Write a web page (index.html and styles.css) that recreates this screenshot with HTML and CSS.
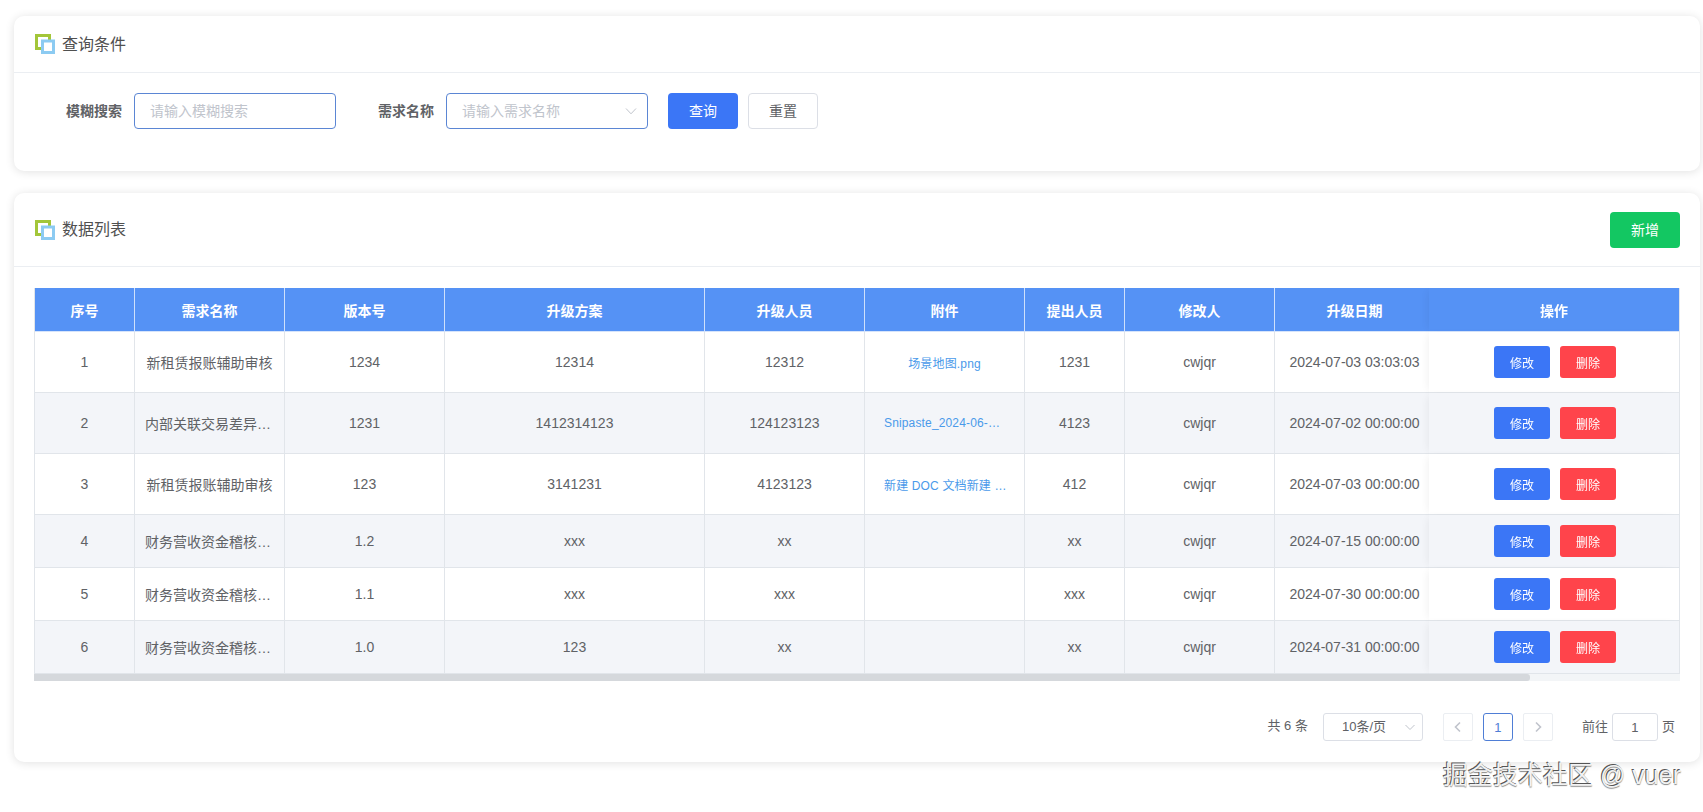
FILE: index.html
```html
<!DOCTYPE html>
<html lang="zh-CN">
<head>
<meta charset="utf-8">
<title>数据列表</title>
<link rel="stylesheet" href="styles.css">
</head>
<body>
<section class="card card-query">
  <header class="card-head head-query">
    <div class="card-title">
      <svg class="title-icon" width="20" height="20" viewBox="0 0 20 20"><rect x="1.5" y="1.5" width="13" height="13" fill="#fff" stroke="#a3c639" stroke-width="3"/><rect x="7.5" y="7" width="11" height="11.5" fill="#fff" stroke="#8ccbf2" stroke-width="3"/></svg>
      <span class="title-text">查询条件</span>
    </div>
  </header>
  <div class="query-body">
    <div class="field field-first">
      <label class="field-label">模糊搜索</label>
      <div class="input input-focus"><span class="placeholder">请输入模糊搜索</span></div>
    </div>
    <div class="field field-second">
      <label class="field-label">需求名称</label>
      <div class="input input-focus select-input"><span class="placeholder">请输入需求名称</span>
        <svg class="chevron" width="12" height="12" viewBox="0 0 12 12"><path d="M1 3.5 L6 8.8 L11 3.5" fill="none" stroke="#c0c4cc" stroke-width="1"/></svg>
      </div>
    </div>
    <button class="btn btn-primary btn-query">查询</button>
    <button class="btn btn-plain btn-reset">重置</button>
  </div>
</section>

<section class="card card-list">
  <header class="card-head head-list">
    <div class="card-title">
      <svg class="title-icon" width="20" height="20" viewBox="0 0 20 20"><rect x="1.5" y="1.5" width="13" height="13" fill="#fff" stroke="#a3c639" stroke-width="3"/><rect x="7.5" y="7" width="11" height="11.5" fill="#fff" stroke="#8ccbf2" stroke-width="3"/></svg>
      <span class="title-text">数据列表</span>
    </div>
    <button class="btn btn-success btn-add">新增</button>
  </header>
  <div class="list-body">
    <div class="table-frame">
      <div class="table-scroll">
        <table class="data-table">
          <colgroup>
            <col class="c-100"><col class="c-150"><col class="c-160"><col class="c-260"><col class="c-160"><col class="c-160"><col class="c-100"><col class="c-150"><col class="c-160"><col class="c-spare"><col class="c-250">
          </colgroup>
          <thead>
            <tr><th>序号</th><th>需求名称</th><th>版本号</th><th>升级方案</th><th>升级人员</th><th>附件</th><th>提出人员</th><th>修改人</th><th>升级日期</th><th></th><th class="fixed">操作</th></tr>
          </thead>
          <tbody>
            <tr class="tall">
              <td>1</td><td><div class="clip">新租赁报账辅助审核</div></td><td>1234</td><td>12314</td><td>12312</td><td class="file"><a class="link">场景地图.png</a></td><td>1231</td><td>cwjqr</td><td>2024-07-03 03:03:03</td><td></td>
              <td class="fixed"><div class="ops"><button class="btn-sm btn-edit">修改</button><button class="btn-sm btn-del">删除</button></div></td>
            </tr>
            <tr class="tall alt">
              <td>2</td><td><div class="clip">内部关联交易差异分析</div></td><td>1231</td><td>1412314123</td><td>124123123</td><td class="file"><a class="link">Snipaste_2024-06-28.png</a></td><td>4123</td><td>cwjqr</td><td>2024-07-02 00:00:00</td><td></td>
              <td class="fixed"><div class="ops"><button class="btn-sm btn-edit">修改</button><button class="btn-sm btn-del">删除</button></div></td>
            </tr>
            <tr class="tall">
              <td>3</td><td><div class="clip">新租赁报账辅助审核</div></td><td>123</td><td>3141231</td><td>4123123</td><td class="file"><a class="link link-wide">新建 DOC 文档新建 DOC</a></td><td>412</td><td>cwjqr</td><td>2024-07-03 00:00:00</td><td></td>
              <td class="fixed"><div class="ops"><button class="btn-sm btn-edit">修改</button><button class="btn-sm btn-del">删除</button></div></td>
            </tr>
            <tr class="short alt">
              <td>4</td><td><div class="clip">财务营收资金稽核系统</div></td><td>1.2</td><td>xxx</td><td>xx</td><td class="file"></td><td>xx</td><td>cwjqr</td><td>2024-07-15 00:00:00</td><td></td>
              <td class="fixed"><div class="ops"><button class="btn-sm btn-edit">修改</button><button class="btn-sm btn-del">删除</button></div></td>
            </tr>
            <tr class="short">
              <td>5</td><td><div class="clip">财务营收资金稽核系统</div></td><td>1.1</td><td>xxx</td><td>xxx</td><td class="file"></td><td>xxx</td><td>cwjqr</td><td>2024-07-30 00:00:00</td><td></td>
              <td class="fixed"><div class="ops"><button class="btn-sm btn-edit">修改</button><button class="btn-sm btn-del">删除</button></div></td>
            </tr>
            <tr class="short alt">
              <td>6</td><td><div class="clip">财务营收资金稽核系统</div></td><td>1.0</td><td>123</td><td>xx</td><td class="file"></td><td>xx</td><td>cwjqr</td><td>2024-07-31 00:00:00</td><td></td>
              <td class="fixed"><div class="ops"><button class="btn-sm btn-edit">修改</button><button class="btn-sm btn-del">删除</button></div></td>
            </tr>
          </tbody>
        </table>
      </div>
      <div class="scroll-track"><div class="scroll-thumb"></div></div>
    </div>
    <nav class="pager">
      <span class="pager-total">共 6 条</span>
      <div class="pager-size"><span class="pager-size-text">10条/页</span>
        <svg width="12" height="12" viewBox="0 0 12 12"><path d="M1.5 4 L6 8.5 L10.5 4" fill="none" stroke="#c0c4cc" stroke-width="1"/></svg>
      </div>
      <div class="pager-box pager-prev"><svg width="10" height="12" viewBox="0 0 10 12"><path d="M7 1.5 L2.5 6 L7 10.5" fill="none" stroke="#c0c4cc" stroke-width="1.6"/></svg></div>
      <div class="pager-box pager-cur">1</div>
      <div class="pager-box pager-next"><svg width="10" height="12" viewBox="0 0 10 12"><path d="M3 1.5 L7.5 6 L3 10.5" fill="none" stroke="#c0c4cc" stroke-width="1.6"/></svg></div>
      <span class="pager-goto">前往</span>
      <div class="pager-input">1</div>
      <span class="pager-unit">页</span>
    </nav>
  </div>
</section>
<div class="watermark">掘金技术社区 @ vuer</div>
</body>
</html>
```

FILE: styles.css
```css
* { box-sizing: border-box; }
html, body { margin: 0; height: 100%; overflow: hidden; }
body {
  padding: 16px 3px 0 14px;
  background: #fff;
  color: #606266;
  font-family: "Liberation Sans", "Noto Sans CJK SC", sans-serif;
  font-size: 14px;
  position: relative;
}
.card {
  background: #fff;
  border-radius: 10px;
  box-shadow: 0 1px 10px rgba(0, 0, 0, 0.12);
}
.card-query { height: 155px; margin-bottom: 22px; }
.card-list { height: 569px; }
.card-head {
  display: flex;
  align-items: center;
  justify-content: space-between;
  border-bottom: 1px solid #ebeef2;
  padding: 0 20px 0 21px;
}
.head-query { height: 57px; }
.head-list { height: 74px; }
.card-title {
  display: flex;
  align-items: center;
  gap: 7px;
  font-size: 16px;
  color: #505050;
}
.title-icon { flex: none; }
.title-text { margin-bottom: 3px; }

.query-body {
  display: flex;
  align-items: center;
  padding-top: 20px;
}
.field { display: flex; align-items: center; gap: 12px; }
.field-first { margin-left: 52px; }
.field-second { margin-left: 42px; }
.field-label { font-weight: 700; color: #606266; width: 56px; white-space: nowrap; margin-bottom: 2px; }
.input {
  width: 202px;
  height: 36px;
  border: 1px solid #5b86d4;
  border-radius: 4px;
  padding: 0 15px;
  display: flex;
  align-items: center;
  justify-content: space-between;
  background: #fff;
}
.placeholder { color: #c0c4cc; margin-bottom: 2px; }
.chevron { margin-right: -5px; }
.btn {
  height: 36px;
  border-radius: 4px;
  font: inherit;
  padding: 0 0 2px;
  cursor: pointer;
}
.btn-primary { background: #3b76f6; color: #fff; border: 0; }
.btn-plain { background: #fff; color: #606266; border: 1px solid #dcdfe6; }
.btn-success { background: #13c762; color: #fff; border: 0; width: 70px; }
.btn-query { width: 70px; margin-left: 20px; }
.btn-reset { width: 70px; margin-left: 10px; }

.list-body { padding: 21px 20px 0 20px; }
.table-frame { width: 1646px; }
.table-scroll {
  overflow: hidden;
  border-left: 1px solid #e1e5ea;
  border-right: 1px solid #e1e5ea;
}
.data-table {
  width: 1811px;
  table-layout: fixed;
  border-collapse: separate;
  border-spacing: 0;
}
.c-100 { width: 100px; }
.c-150 { width: 150px; }
.c-160 { width: 160px; }
.c-260 { width: 260px; }
.c-spare { width: 161px; }
.c-250 { width: 250px; }
.data-table th {
  height: 44px;
  padding: 0 10px;
  background: #5592f5;
  color: #fff;
  font-weight: 700;
  text-align: center;
  border-right: 1px solid #cfe0fb;
  border-bottom: 1px solid #d6e4fb;
}
.data-table td {
  padding: 0 10px;
  text-align: center;
  border-right: 1px solid #e1e5ea;
  border-bottom: 1px solid #e1e5ea;
  background: #fff;
  white-space: nowrap;
}
.data-table tr.alt td { background: #f3f5f9; }
.tall td { height: 61px; }
.short td { height: 53px; }
.clip { overflow: hidden; text-overflow: ellipsis; white-space: nowrap; }
.data-table td.file { padding: 0 19px; }
.link {
  display: block;
  color: #4a9aea;
  font-size: 12px;
  letter-spacing: 0.15px;
  overflow: hidden;
  text-overflow: ellipsis;
  white-space: nowrap;
}
.link-wide { margin-right: -2px; }
.data-table .fixed {
  position: sticky;
  right: 0;
  border-right: 0;
  box-shadow: -4px 0 8px -3px rgba(0, 0, 0, 0.06);
}
.data-table th.fixed { background: #5592f5; }
.ops { display: flex; justify-content: center; gap: 10px; margin-left: 2px; }
.btn-sm {
  width: 56px;
  height: 32px;
  border: 0;
  border-radius: 3px;
  color: #fff;
  font: inherit;
  font-size: 12px;
  padding: 0;
  cursor: pointer;
}
.btn-edit { background: #3b76f6; }
.btn-del { background: #ff444b; }
.scroll-track { height: 7px; background: #f3f5f7; }
.scroll-thumb { width: 1496px; height: 100%; background: #d5d8dc; border-radius: 0 3px 3px 0; }

.pager {
  display: flex;
  align-items: center;
  justify-content: flex-end;
  margin-top: 32px;
  height: 28px;
  font-size: 13px;
  color: #606266;
}
.pager-total { margin-right: 15px; white-space: nowrap; margin-bottom: 5px; }
.pager-size {
  width: 100px;
  height: 28px;
  border: 1px solid #dcdfe6;
  border-radius: 3px;
  display: flex;
  align-items: center;
  justify-content: space-between;
  padding: 0 6px 0 18px;
  margin-right: 20px;
}
.pager-size-text { margin-bottom: 3px; }
.pager-box {
  width: 30px;
  height: 28px;
  border: 1px solid #ebeef2;
  border-radius: 2px;
  display: flex;
  align-items: center;
  justify-content: center;
  background: #fff;
}
.pager-cur { border-color: #4f7ed6; color: #4f7ed6; margin: 0 10px; border-radius: 3px; }
.pager-goto { margin-left: 29px; margin-right: 4px; white-space: nowrap; margin-bottom: 3px; }
.pager-input {
  width: 46px;
  height: 28px;
  border: 1px solid #dcdfe6;
  border-radius: 3px;
  display: flex;
  align-items: center;
  justify-content: center;
}
.pager-unit { margin-left: 4px; margin-right: 5px; margin-bottom: 3px; }

.watermark {
  position: absolute;
  right: 22px;
  top: 760px;
  font-size: 25px;
  line-height: 30px;
  color: #f2f2f2;
  white-space: nowrap;
  text-shadow: -1px -1px 0 #555, 0 1px 1px #888;
}
```
